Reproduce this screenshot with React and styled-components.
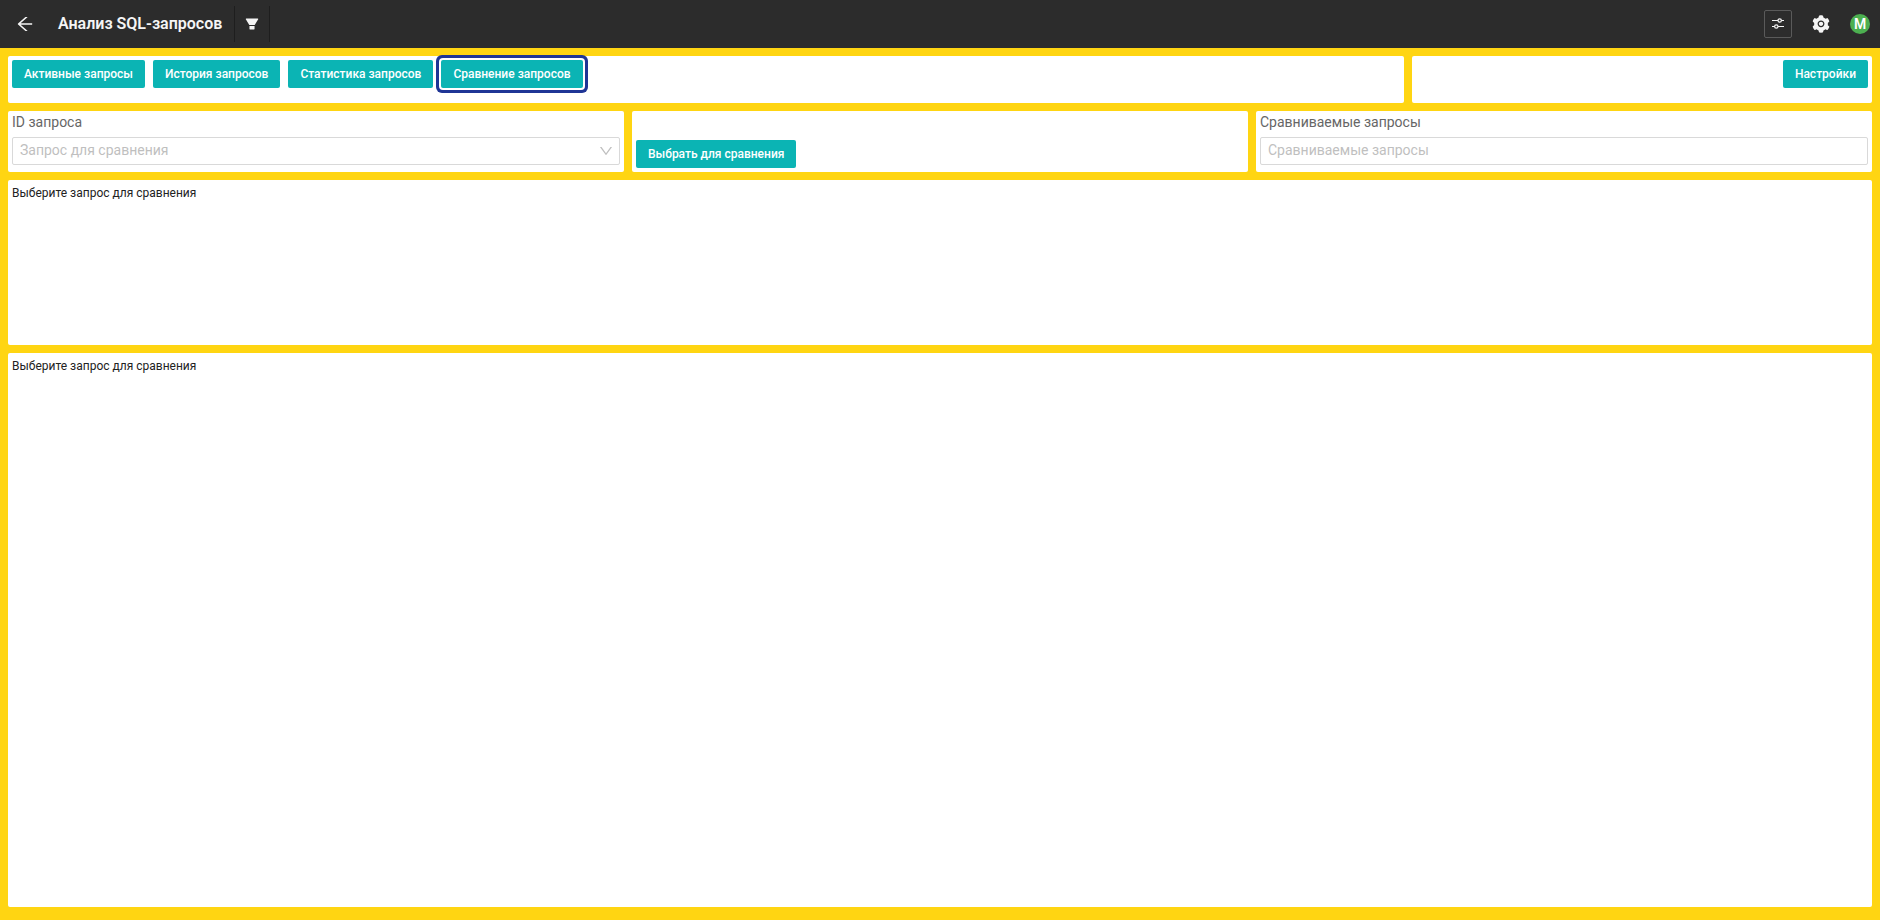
import React, { useState } from 'react';
import styled, { createGlobalStyle, css } from 'styled-components';
import {
  AiFillFilter,
  AiFillSetting,
  AiOutlineArrowLeft,
  AiOutlineDown,
} from 'react-icons/ai';

const GlobalStyle = createGlobalStyle`
  * {
    box-sizing: border-box;
  }

  body {
    margin: 0;
    background: #ffd512;
    font-family: Roboto, sans-serif;
    font-size: 12px;
    color: #222;
  }
`;

const Page = styled.div`
  min-height: 100vh;
  display: flex;
  flex-direction: column;
`;

const Header = styled.header`
  height: 48px;
  display: flex;
  align-items: center;
  justify-content: space-between;
  background: #2c2c2c;
  color: #f5f5f5;
`;

const HeaderGroup = styled.div`
  display: flex;
  align-items: center;
  gap: ${({ $gap }) => $gap || '0'};
  padding: ${({ $padding }) => $padding || '0'};
`;

const Title = styled.h1`
  margin: 0 12px 0 8px;
  font-size: 16px;
  line-height: 24px;
  font-weight: 600;
`;

const IconButton = styled.button`
  display: flex;
  align-items: center;
  justify-content: center;
  width: ${({ $width }) => $width || '28px'};
  height: 28px;
  padding: 0;
  border: ${({ $framed }) => ($framed ? '1px solid #5a5a5a' : '0')};
  border-radius: 2px;
  background: transparent;
  color: inherit;
  cursor: pointer;
`;

const FilterSlot = styled.div`
  display: flex;
  align-items: center;
  justify-content: center;
  width: 36px;
  height: 36px;
  border: solid #1e1e1e;
  border-width: 0 1px;
`;

const Avatar = styled.span`
  width: 20px;
  height: 20px;
  border-radius: 50%;
  background: #4caf50;
  color: #fff;
  font-size: 14px;
  line-height: 20px;
  font-weight: 600;
  text-align: center;
`;

const Dashboard = styled.main`
  flex: 1;
  display: grid;
  grid-template-columns: repeat(12, minmax(0, 1fr));
  grid-template-rows: auto auto minmax(165px, auto) 1fr;
  gap: 8px;
  padding: 8px 8px 13px;
`;

const Panel = styled.section`
  grid-column: span ${({ $span }) => $span};
  min-height: ${({ $minHeight }) => $minHeight || '0'};
  padding: 4px;
  border-radius: 2px;
  background: #fff;
`;

const ButtonRow = styled.div`
  display: flex;
  flex-wrap: wrap;
  gap: 8px;
  justify-content: ${({ $align }) => $align || 'flex-start'};
`;

const Button = styled.button`
  height: 28px;
  padding: 0 12px 1px;
  border: 0;
  border-radius: 2px;
  background: #0bb4b4;
  color: #fff;
  font: 500 12px/24px Roboto, sans-serif;
  white-space: nowrap;
  cursor: pointer;

  ${({ $active }) =>
    $active &&
    css`
      box-shadow: 0 0 0 2px #fff, 0 0 0 5px #1f3595;
    `}
`;

const ActionPanel = styled(Panel)`
  display: flex;
  align-items: flex-end;
`;

const Field = styled.div`
  display: flex;
  flex-direction: column;
  gap: 8px;
`;

const Label = styled.label`
  color: #666;
  font-size: 14px;
  line-height: 14px;
`;

const controlStyles = css`
  width: 100%;
  height: 28px;
  padding: 0 7px 2px;
  border: 1px solid #d9d9d9;
  border-radius: 2px;
  background: #fff;
  color: #bfbfbf;
  font: 14px/24px Roboto, sans-serif;
`;

const Input = styled.input`
  ${controlStyles}

  &::placeholder {
    color: #bfbfbf;
    opacity: 1;
  }
`;

const SelectWrap = styled.div`
  position: relative;
`;

const Select = styled.select`
  ${controlStyles}
  display: block;
  appearance: none;
`;

const Chevron = styled(AiOutlineDown)`
  position: absolute;
  top: 6px;
  right: 6px;
  color: #bfbfbf;
  pointer-events: none;
`;

const Message = styled.p`
  margin: 0;
  line-height: 18px;
`;

const tabs = [
  'Активные запросы',
  'История запросов',
  'Статистика запросов',
  'Сравнение запросов',
];

const SlidersIcon = () => (
  <svg width="12" height="12" viewBox="0 0 12 12" fill="none" stroke="currentColor" strokeWidth="1.2">
    <path d="M0 2.500h6M9.500 2.500H12M0 8.500h2.500M6 8.500H12" />
    <circle cx="7.700" cy="2.500" r="1.700" />
    <circle cx="4.300" cy="8.500" r="1.700" />
  </svg>
);

const App = () => {
  const [activeTab, setActiveTab] = useState(3);

  return (
    <Page>
      <GlobalStyle />
      <Header>
        <HeaderGroup>
          <IconButton $width="50px" aria-label="Назад">
            <AiOutlineArrowLeft size={20} />
          </IconButton>
          <Title>Анализ SQL-запросов</Title>
          <FilterSlot>
            <IconButton aria-label="Фильтр">
              <AiFillFilter size={16} />
            </IconButton>
          </FilterSlot>
        </HeaderGroup>
        <HeaderGroup $gap="15px" $padding="0 10px 0 0">
          <IconButton $framed aria-label="Параметры">
            <SlidersIcon />
          </IconButton>
          <IconButton aria-label="Настройки системы">
            <AiFillSetting size={20} />
          </IconButton>
          <Avatar>M</Avatar>
        </HeaderGroup>
      </Header>

      <Dashboard>
        <Panel $span={9} $minHeight="47px">
          <ButtonRow>
            {tabs.map((tab, index) => (
              <Button
                key={tab}
                type="button"
                $active={index === activeTab}
                onClick={() => setActiveTab(index)}
              >
                {tab}
              </Button>
            ))}
          </ButtonRow>
        </Panel>
        <Panel $span={3} $minHeight="47px">
          <ButtonRow $align="flex-end">
            <Button type="button">Настройки</Button>
          </ButtonRow>
        </Panel>

        <Panel $span={4} $minHeight="61px">
          <Field>
            <Label htmlFor="query-id">ID запроса</Label>
            <SelectWrap>
              <Select id="query-id" defaultValue="">
                <option value="">Запрос для сравнения</option>
              </Select>
              <Chevron size={16} />
            </SelectWrap>
          </Field>
        </Panel>
        <ActionPanel $span={4}>
          <Button type="button">Выбрать для сравнения</Button>
        </ActionPanel>
        <Panel $span={4}>
          <Field>
            <Label htmlFor="compared">Сравниваемые запросы</Label>
            <Input id="compared" placeholder="Сравниваемые запросы" />
          </Field>
        </Panel>

        <Panel $span={12}>
          <Message>Выберите запрос для сравнения</Message>
        </Panel>
        <Panel $span={12}>
          <Message>Выберите запрос для сравнения</Message>
        </Panel>
      </Dashboard>
    </Page>
  );
};

export default App;
